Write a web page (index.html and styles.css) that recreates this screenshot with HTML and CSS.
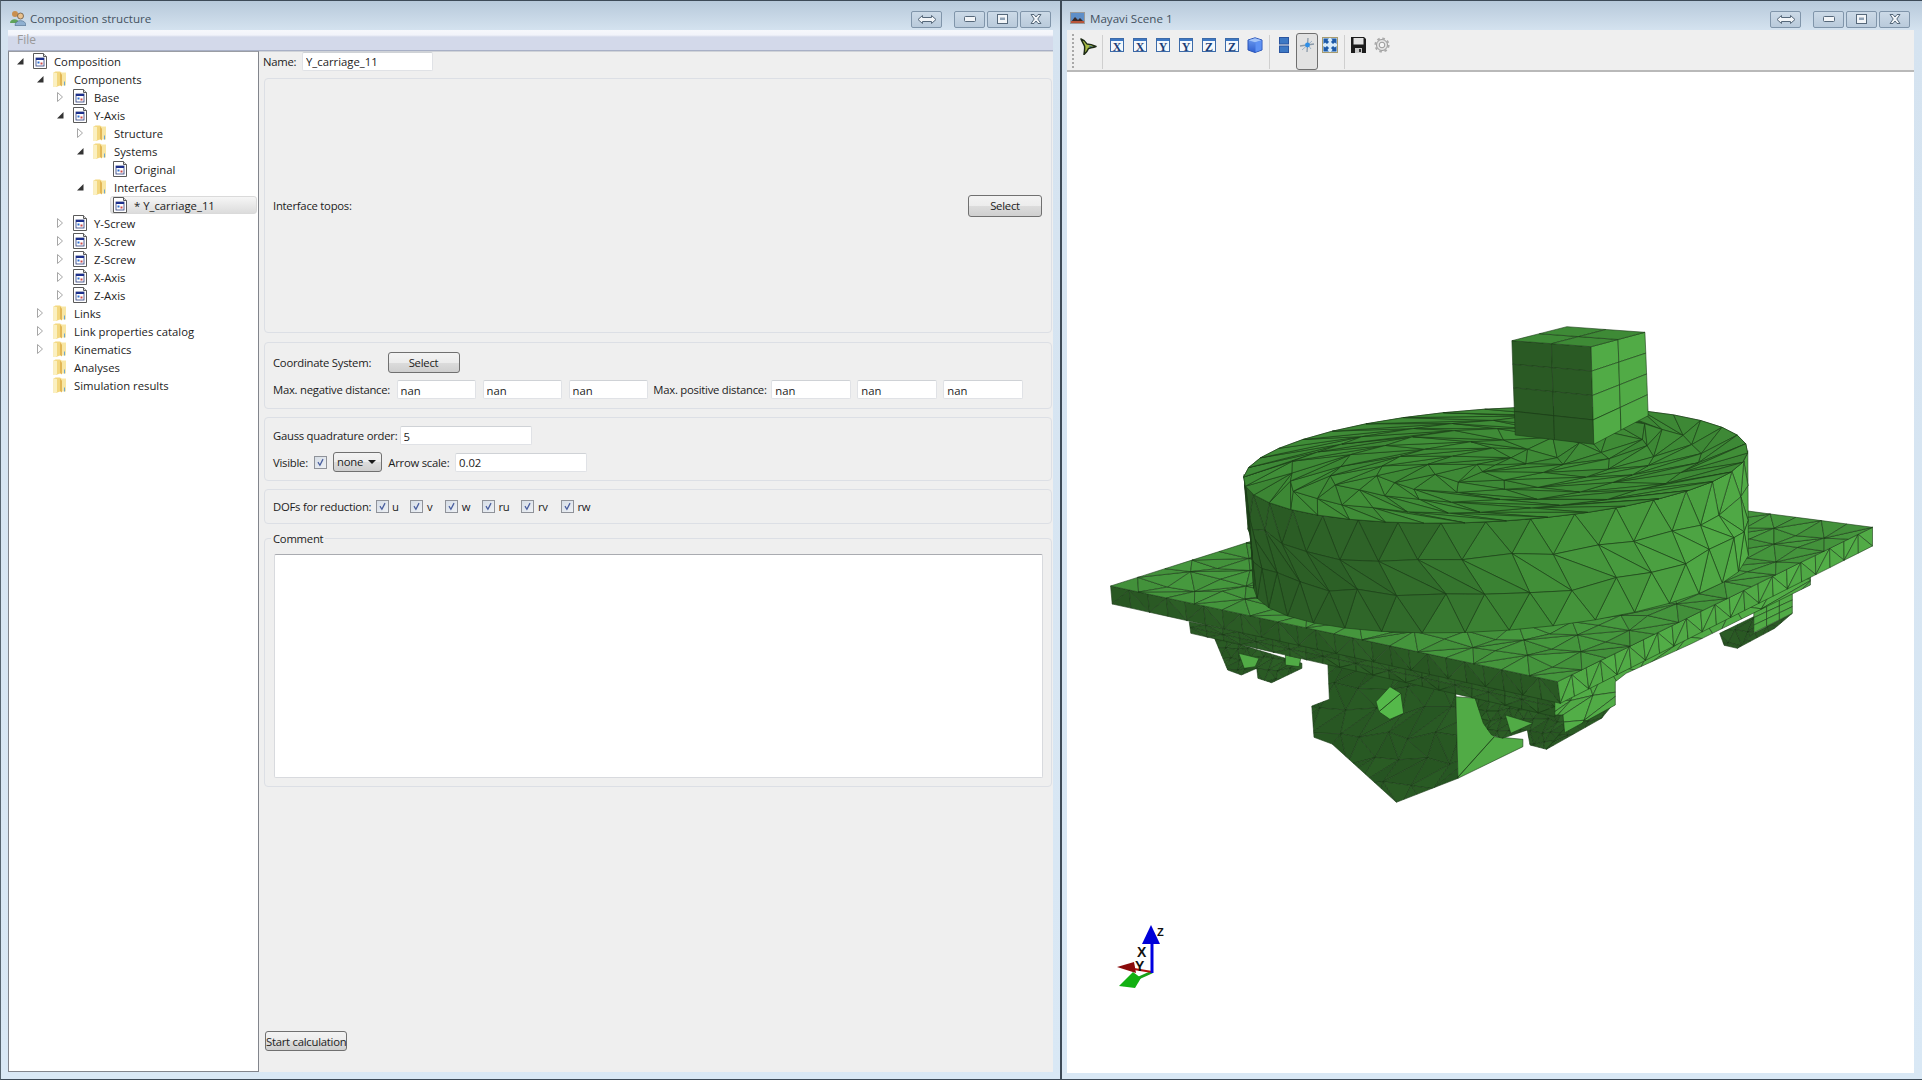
FILE: index.html
```html
<!DOCTYPE html>
<html>
	<head>
		<title>Composition structure</title>
		<link rel="stylesheet" href="styles.css">
	</head>
	<body>
		<svg class="defs" width="0" height="0">
			<linearGradient id="cube-side" x1="0" y1="0" x2="0" y2="1">
				<stop offset="0" stop-color="#6f9df0"/>
				<stop offset="1" stop-color="#2f5fd0"/>
			</linearGradient>
			<symbol id="doc" viewBox="0 0 14 16">
				<path d="M.5 .5H10.5L13.5 3.5V15.5H.5Z" fill="#fff" stroke="#5a5a5a"/>
				<path d="M10.5 .5V3.5H13.5" fill="#ddd" stroke="#5a5a5a"/>
				<rect x="3" y="5" width="8" height="8" fill="#fff" stroke="#2a3a7a" stroke-width=".8"/>
				<rect x="3" y="5" width="8" height="2" fill="#1c2f8c"/>
				<rect x="4.5" y="8.5" width="2" height="2" fill="#2f6fd0"/>
				<rect x="7.5" y="9.5" width="2" height="2" fill="#d04a4a"/>
			</symbol>
			<symbol id="folder" viewBox="0 0 13 16">
				<path d="M0 1.5L2 .5H6.5L8 1.5V14L2.5 16H0Z" fill="#f3d77f"/>
				<path d="M7 1.5H12.5V14.5H7Z" fill="#f8e6a4"/>
				<path d="M0 1.5V16H2.5L3.5 15V2Z" fill="#fbf0c0"/>
				<path d="M6.5 1.5L8.5 3.5V15.5L6.5 14Z" fill="#e2b655"/>
				<path d="M11.5 10.5V14.5H10.5V10.5Z" fill="#6fa6d0"/>
			</symbol>
			<symbol id="open" viewBox="0 0 8 10">
				<path d="M7.5 2V8.5H1Z" fill="#333"/>
			</symbol>
			<symbol id="closed" viewBox="0 0 8 10">
				<path d="M1.5 .5L6.5 5L1.5 9.5Z" fill="#fff" stroke="#a6a6a6"/>
			</symbol>
			<symbol id="check" viewBox="0 0 13 13">
				<path d="M3.5 6L5.8 9.8L9.5 2.5" fill="none" stroke="#4a5f9f" stroke-width="1.5"/>
			</symbol>
			<symbol id="axis-box" viewBox="0 0 14 14">
				<rect x=".5" y=".5" width="13" height="13" fill="#f4f8fc" stroke="#3c6aa8"/>
				<rect x="1" y="1" width="12" height="2" fill="#3d78c4"/>
			</symbol>
		</svg>

		<div class="window window-left">
			<div class="titlebar">
				<svg class="title-icon" viewBox="0 0 16 16">
					<circle cx="5" cy="4" r="3" fill="#c98f4e"/>
					<path d="M0 13C0 8 9 8 9 13Z" fill="#5fa35a"/>
					<circle cx="10.5" cy="6" r="3" fill="#e9c18d" stroke="#5a4630" stroke-width=".7"/>
					<path d="M5 15.5C5 9 16 9 16 15.5Z" fill="#8fb0d0" stroke="#4a6a8a" stroke-width=".6"/>
				</svg>
				<span class="title-text">Composition structure</span>
				<div class="winbtn winbtn-wide">
					<svg width="20" height="11" viewBox="0 0 20 11"><path d="M1 5.5L5.5 1.5V3.5H14.5V1.5L19 5.5L14.5 9.5V7.5H5.5V9.5Z" fill="#f2f5f8" stroke="#56687a"/></svg>
				</div>
				<div class="winbtn winbtn-min">
					<svg width="12" height="6" viewBox="0 0 12 6"><rect x=".5" y=".5" width="11" height="5" rx="1" fill="#f2f5f8" stroke="#56687a"/></svg>
				</div>
				<div class="winbtn">
					<svg width="11" height="10" viewBox="0 0 11 10"><rect x=".5" y=".5" width="10" height="9" fill="#f2f5f8" stroke="#56687a"/><rect x="3" y="3.5" width="5" height="2.5" fill="#8fa2b5"/></svg>
				</div>
				<div class="winbtn">
					<svg width="12" height="10" viewBox="0 0 12 10"><path d="M1 .5H4L6 3L8 .5H11L7.8 5L11 9.5H8L6 7L4 9.5H1L4.2 5Z" fill="#f2f5f8" stroke="#56687a"/></svg>
				</div>
			</div>
			<div class="menubar"><span class="menu-item">File</span></div>
			<div class="client">
				<div class="tree">
					<div class="row lvl0"><svg class="arrow"><use href="#open"/></svg><div class="item"><svg class="ico"><use href="#doc"/></svg>Composition</div></div>
					<div class="row lvl1"><svg class="arrow"><use href="#open"/></svg><div class="item"><svg class="ico"><use href="#folder"/></svg>Components</div></div>
					<div class="row lvl2"><svg class="arrow"><use href="#closed"/></svg><div class="item"><svg class="ico"><use href="#doc"/></svg>Base</div></div>
					<div class="row lvl2"><svg class="arrow"><use href="#open"/></svg><div class="item"><svg class="ico"><use href="#doc"/></svg>Y-Axis</div></div>
					<div class="row lvl3"><svg class="arrow"><use href="#closed"/></svg><div class="item"><svg class="ico"><use href="#folder"/></svg>Structure</div></div>
					<div class="row lvl3"><svg class="arrow"><use href="#open"/></svg><div class="item"><svg class="ico"><use href="#folder"/></svg>Systems</div></div>
					<div class="row lvl4"><span class="arrow"></span><div class="item"><svg class="ico"><use href="#doc"/></svg>Original</div></div>
					<div class="row lvl3"><svg class="arrow"><use href="#open"/></svg><div class="item"><svg class="ico"><use href="#folder"/></svg>Interfaces</div></div>
					<div class="row lvl4"><span class="arrow"></span><div class="item selected"><svg class="ico"><use href="#doc"/></svg>* Y_carriage_11</div></div>
					<div class="row lvl2"><svg class="arrow"><use href="#closed"/></svg><div class="item"><svg class="ico"><use href="#doc"/></svg>Y-Screw</div></div>
					<div class="row lvl2"><svg class="arrow"><use href="#closed"/></svg><div class="item"><svg class="ico"><use href="#doc"/></svg>X-Screw</div></div>
					<div class="row lvl2"><svg class="arrow"><use href="#closed"/></svg><div class="item"><svg class="ico"><use href="#doc"/></svg>Z-Screw</div></div>
					<div class="row lvl2"><svg class="arrow"><use href="#closed"/></svg><div class="item"><svg class="ico"><use href="#doc"/></svg>X-Axis</div></div>
					<div class="row lvl2"><svg class="arrow"><use href="#closed"/></svg><div class="item"><svg class="ico"><use href="#doc"/></svg>Z-Axis</div></div>
					<div class="row lvl1"><svg class="arrow"><use href="#closed"/></svg><div class="item"><svg class="ico"><use href="#folder"/></svg>Links</div></div>
					<div class="row lvl1"><svg class="arrow"><use href="#closed"/></svg><div class="item"><svg class="ico"><use href="#folder"/></svg>Link properties catalog</div></div>
					<div class="row lvl1"><svg class="arrow"><use href="#closed"/></svg><div class="item"><svg class="ico"><use href="#folder"/></svg>Kinematics</div></div>
					<div class="row lvl1"><span class="arrow"></span><div class="item"><svg class="ico"><use href="#folder"/></svg>Analyses</div></div>
					<div class="row lvl1"><span class="arrow"></span><div class="item"><svg class="ico"><use href="#folder"/></svg>Simulation results</div></div>
				</div>
				<div class="form">
					<div class="name-row">
						<label class="name-label">Name:</label>
						<input class="field field-name" value="Y_carriage_11">
					</div>
					<div class="group group-topos">
						<span>Interface topos:</span>
						<button class="btn btn-select">Select</button>
					</div>
					<div class="group group-coord">
						<div class="line">
							<label class="lbl-coord">Coordinate System:</label>
							<button class="btn btn-select-coord">Select</button>
						</div>
						<div class="line line-gap">
							<label class="lbl-neg">Max. negative distance:</label>
							<input class="field field-nan" value="nan">
							<input class="field field-nan" value="nan">
							<input class="field field-nan" value="nan">
							<label class="lbl-pos">Max. positive distance:</label>
							<input class="field field-nan" value="nan">
							<input class="field field-nan" value="nan">
							<input class="field field-nan" value="nan">
						</div>
					</div>
					<div class="group group-gauss">
						<div class="line">
							<label class="lbl-gauss">Gauss quadrature order:</label>
							<input class="field field-long" value="5">
						</div>
						<div class="line line-gap">
							<label class="lbl-visible">Visible:</label>
							<span class="check"><svg><use href="#check"/></svg></span>
							<div class="combo">none</div>
							<label class="lbl-arrow">Arrow scale:</label>
							<input class="field field-long" value="0.02">
						</div>
					</div>
					<div class="group group-dofs">
						<label class="lbl-dofs">DOFs for reduction:</label>
						<div class="dof"><span class="check"><svg><use href="#check"/></svg></span>u</div>
						<div class="dof"><span class="check"><svg><use href="#check"/></svg></span>v</div>
						<div class="dof dof-w"><span class="check"><svg><use href="#check"/></svg></span>w</div>
						<div class="dof dof-r"><span class="check"><svg><use href="#check"/></svg></span>ru</div>
						<div class="dof dof-r"><span class="check"><svg><use href="#check"/></svg></span>rv</div>
						<div class="dof dof-r"><span class="check"><svg><use href="#check"/></svg></span>rw</div>
					</div>
					<div class="group group-comment">
						<span class="legend">Comment</span>
						<textarea class="comment"></textarea>
					</div>
					<button class="btn btn-start">Start calculation</button>
				</div>
			</div>
		</div>

		<div class="window window-right">
			<div class="titlebar">
				<svg class="scene-icon" viewBox="0 0 15 12">
					<rect x=".5" y=".5" width="14" height="11" fill="#5f8fc8" stroke="#9a9a9a"/>
					<path d="M1 10L5 5L8 8L10 6L14 10V11H1Z" fill="#3a2a28"/>
					<path d="M1 9H14V11H1Z" fill="#b8553a"/>
				</svg>
				<span class="title-text">Mayavi Scene 1</span>
				<div class="winbtn winbtn-wide">
					<svg width="20" height="11" viewBox="0 0 20 11"><path d="M1 5.5L5.5 1.5V3.5H14.5V1.5L19 5.5L14.5 9.5V7.5H5.5V9.5Z" fill="#f2f5f8" stroke="#56687a"/></svg>
				</div>
				<div class="winbtn winbtn-min">
					<svg width="12" height="6" viewBox="0 0 12 6"><rect x=".5" y=".5" width="11" height="5" rx="1" fill="#f2f5f8" stroke="#56687a"/></svg>
				</div>
				<div class="winbtn">
					<svg width="11" height="10" viewBox="0 0 11 10"><rect x=".5" y=".5" width="10" height="9" fill="#f2f5f8" stroke="#56687a"/><rect x="3" y="3.5" width="5" height="2.5" fill="#8fa2b5"/></svg>
				</div>
				<div class="winbtn">
					<svg width="12" height="10" viewBox="0 0 12 10"><path d="M1 .5H4L6 3L8 .5H11L7.8 5L11 9.5H8L6 7L4 9.5H1L4.2 5Z" fill="#f2f5f8" stroke="#56687a"/></svg>
				</div>
			</div>
			<div class="toolbar">
				<span class="grip"></span>
				<svg class="tb-mayavi" viewBox="0 0 17 17">
					<path d="M1 1C4 2 6 4 7 6C10 6 13 7 16 8.5C13 9.5 10 10 8.5 10.5C7.5 13 6 15 4 16.5C4.5 13 5 10.5 4.5 8C3.5 6 2 3.5 1 1Z" fill="#a9bc45" stroke="#1d2a16" stroke-width="1.5" stroke-linejoin="round"/>
					<path d="M9 7.5L13 8.5L9.5 9.3Z" fill="#3f6f8f"/>
				</svg>
				<span class="sep"></span>
				<svg class="tb-axis"><use href="#axis-box"/><text x="7" y="12.5">X</text></svg>
				<svg class="tb-axis"><use href="#axis-box"/><text x="7" y="12.5">X</text></svg>
				<svg class="tb-axis"><use href="#axis-box"/><text x="7" y="12.5">Y</text></svg>
				<svg class="tb-axis"><use href="#axis-box"/><text x="7" y="12.5">Y</text></svg>
				<svg class="tb-axis"><use href="#axis-box"/><text x="7" y="12.5">Z</text></svg>
				<svg class="tb-axis"><use href="#axis-box"/><text x="7" y="12.5">Z</text></svg>
				<svg class="tb-cube" viewBox="0 0 16 16">
					<path d="M8 .8L15 3V13L8 15.5L1 13V3Z" fill="url(#cube-side)" stroke="#2a55b8" stroke-linejoin="round"/>
					<path d="M1.5 3.2L8 1.2L14.5 3.2L8 5.2Z" fill="#a4c4f8"/>
					<path d="M8.5 5.5V15L14.5 12.7V3.5Z" fill="#5f92f4"/>
				</svg>
				<span class="sep sep-cube"></span>
				<svg class="tb-split" viewBox="0 0 10 16">
					<rect x=".5" y=".5" width="9" height="6.5" fill="#3d78c4" stroke="#2a55a0"/>
					<rect x=".5" y="9" width="9" height="6.5" fill="#3d78c4" stroke="#2a55a0"/>
				</svg>
				<div class="tb-active">
					<svg width="16" height="16" viewBox="0 0 16 16">
						<path d="M9 1L8 15M1 9L15 7" stroke="#8a99a8" stroke-width="1.3"/>
						<path d="M3 13L13 4M12 12L9 8" stroke="#9fb4c8" stroke-width="1"/>
						<circle cx="8.5" cy="8" r="2.4" fill="#2f8fe8"/>
					</svg>
				</div>
				<svg class="tb-full" viewBox="0 0 16 16">
					<rect x=".5" y=".5" width="15" height="15" fill="#d8ecfb" stroke="#a89c70"/>
					<path d="M1.5 1.5H7L5.4 3.1L7 5L5 7L3.1 5.4L1.5 7ZM14.5 1.5V7L12.9 5.4L11 7L9 5L10.6 3.1L9 1.5ZM1.5 14.5V9L3.1 10.6L5 9L7 11L5.4 12.9L7 14.5ZM14.5 14.5H9L10.6 12.9L9 11L11 9L12.9 10.6L14.5 9Z" fill="#1d5aa8"/>
				</svg>
				<span class="sep sep-full"></span>
				<svg class="tb-save" viewBox="0 0 15 16">
					<path d="M0 0H13L15 2V16H0Z" fill="#1c1c1c"/>
					<rect x="2.5" y="1" width="10" height="6.5" fill="#e2e2e2"/>
					<rect x="4" y="11" width="7" height="5" fill="#c8c8c8"/>
					<rect x="8" y="12" width="2" height="3" fill="#333"/>
				</svg>
				<svg class="tb-gear" viewBox="0 0 16 16">
					<circle cx="8" cy="8" r="5.5" fill="#e4e4e4" stroke="#999" stroke-width="1"/>
					<circle cx="8" cy="8" r="6.6" fill="none" stroke="#aaa" stroke-width="2" stroke-dasharray="2.6 2.6"/>
					<circle cx="8" cy="8" r="2.8" fill="#f4f4f4" stroke="#999"/>
				</svg>
			</div>
			<div class="scene">
				<svg id="mesh" class="scene-svg" viewBox="1067 72 846 1001">
					<path d="M1152 972L1123 985" stroke="#1aa01a" stroke-width="3"/>
					<path d="M1119 986L1133 972L1141 978L1135 988Z" fill="#12b012"/>
					<path d="M1152 972L1128 968" stroke="#b01010" stroke-width="2"/>
					<path d="M1117 967L1134 962L1136 973Z" fill="#8a0c0c"/>
					<path d="M1152 973V940" stroke="#0000e0" stroke-width="3"/>
					<path d="M1151 925L1160 944H1142Z" fill="#0000d8"/>
					<text class="axis-label" x="1157" y="936">Z</text>
					<text class="axis-label axis-large" x="1137" y="957">X</text>
					<text class="axis-label axis-large" x="1135" y="971">Y</text>
				</svg>
			</div>
		</div>
		<script src="mesh.js"></script>
	</body>
</html>
```

FILE: styles.css
```css
html, body { margin: 0; padding: 0; }
body {
	display: flex;
	width: 1922px;
	height: 1080px;
	overflow: hidden;
	font-family: "Open Sans", "Noto Sans", sans-serif;
	font-size: 11.3px;
	color: #1c1c1c;
	background: #d9e7f4;
}
.defs { position: absolute; }

.window {
	box-sizing: border-box;
	display: flex;
	flex-direction: column;
	height: 1080px;
	background: linear-gradient(180deg, #b7c9da 0, #d5e3f0 30px, #d9e8f5 100%);
	border-top: 1px solid #3d4a57;
	border-bottom: 1px solid #3d4a57;
}
.window-left { width: 1061px; border-left: 1px solid #56646f; border-right: 1px solid #3d4a57; padding: 0 7px 7px 7px; }
.window-right { width: 861px; border-left: 1px solid #3d4a57; padding: 0 8px 6px 5px; }

.titlebar { display: flex; align-items: center; height: 29px; flex: none; }
.title-icon { width: 16px; height: 16px; margin: 5px 4px 0 2px; }
.scene-icon { width: 15px; height: 12px; margin: 5px 5px 0 3px; }
.title-text { flex: 1; color: #44525f; font-size: 11.6px; margin-top: 5px; }
.winbtn {
	box-sizing: border-box;
	display: flex;
	align-items: center;
	justify-content: center;
	width: 31px;
	height: 17px;
	margin: 7px 0 0 2px;
	border: 1px solid #8095aa;
	border-radius: 2px;
	background: linear-gradient(180deg, #ccdae7, #b9cadb);
}
.winbtn-wide { margin-right: 10px; }
.window-left .winbtn:last-child { margin-right: 2px; }
.window-right .winbtn:last-child { margin-right: 4px; }

.menubar {
	flex: none;
	box-sizing: border-box;
	height: 21px;
	padding: 1px 0 0 9px;
	background: linear-gradient(180deg, #f6f8fc 0, #f2f4fa 5px, #d3d9ea 7px, #d3d9ea 100%);
	border-bottom: 1px solid #a8b0c6;
}
.menu-item { color: #9a9a9a; font-size: 12px; }

.client { flex: 1; display: flex; min-height: 0; }

.tree {
	box-sizing: border-box;
	width: 251px;
	flex: none;
	background: #fff;
	border: 1px solid #82858c;
	border-top: 1px solid #9a9da4;
}
.row { display: flex; align-items: center; height: 18px; }
.lvl0 { padding-left: 7px; }
.lvl1 { padding-left: 27px; }
.lvl2 { padding-left: 47px; }
.lvl3 { padding-left: 67px; }
.lvl4 { padding-left: 87px; }
.arrow { flex: none; width: 8px; height: 10px; margin-right: 6px; }
.item { flex: 1; display: flex; align-items: center; height: 18px; padding-left: 3px; box-sizing: border-box; white-space: pre; }
.ico { flex: none; width: 14px; height: 16px; margin-right: 7px; }
.selected {
	margin-right: 1px;
	background: linear-gradient(180deg, #f6f6f6, #dcdcdc);
	border: 1px solid #dadada;
	border-radius: 3px;
	padding-left: 2px;
}

.form { flex: 1; display: flex; flex-direction: column; background: #efefef; border-top: 1px solid #d0d3d8; min-width: 0; letter-spacing: -0.25px; }
.form label, .form span, .dof, .btn { white-space: nowrap; flex: none; }
.name-row { display: flex; align-items: center; height: 18px; }
.name-label { width: 39px; padding-left: 4px; box-sizing: border-box; margin-right: 4px; }

.field {
	box-sizing: border-box;
	flex: none;
	height: 19px;
	padding: 1px 3px 0;
	font: inherit;
	letter-spacing: 0;
	color: #1c1c1c;
	background: #fff;
	border: 1px solid #e0e2e6;
	border-top-color: #cfd2d6;
	border-radius: 2px;
	outline: none;
}
.field-name { width: 131px; }
.field-nan { width: 79.5px; margin-right: 6.5px; }
.field-long { width: 132px; }

.group {
	box-sizing: border-box;
	margin: 8px 1px 0 5px;
	padding: 0 9px 0 8px;
	border: 1px solid #dcdfe5;
	border-radius: 4px;
	flex: none;
}
.group-topos { height: 255px; margin-top: 8px; display: flex; align-items: center; justify-content: space-between; }
.group-coord { height: 67px; margin-top: 9px; padding-top: 9px; }
.group-gauss { height: 64px; padding-top: 8px; }
.group-dofs { height: 35px; display: flex; align-items: center; }
.group-comment { height: 249px; margin-top: 14px; padding: 15px 7px 0 9px; position: relative; }

.line { display: flex; align-items: center; }
.line-gap { margin-top: 7px; }
.lbl-coord { width: 114.5px; }
.lbl-neg { width: 123.5px; }
.lbl-pos { width: 118px; margin-left: -1.2px; }
.lbl-gauss { width: 126.5px; }
.lbl-visible { width: 40.5px; }
.lbl-arrow { width: 66.7px; margin-left: 6.3px; }
.lbl-dofs { width: 102.5px; }

.legend { position: absolute; top: -8px; left: 6px; padding: 0 2px; background: #efefef; }
.comment {
	display: block;
	box-sizing: border-box;
	width: 769px;
	height: 224px;
	resize: none;
	background: #fff;
	border: 1px solid #d8dade;
	border-top-color: #a9abb0;
	border-radius: 2px;
	outline: none;
}

.btn {
	box-sizing: border-box;
	padding: 0;
	font: inherit;
	letter-spacing: -0.25px;
	color: #1c1c1c;
	background: linear-gradient(180deg, #f3f3f3 0, #ececec 50%, #dcdcdc 51%, #cfcfcf 100%);
	border: 1px solid #707070;
	border-radius: 3px;
}
.btn-select { width: 74px; height: 22px; }
.btn-select-coord { width: 72px; height: 21px; }
.btn-start { width: 82px; height: 20px; margin: auto 0 21px 6px; }

.check {
	flex: none;
	box-sizing: border-box;
	display: inline-block;
	width: 13px;
	height: 13px;
	background: linear-gradient(135deg, #d6dde6, #eef1f5);
	border: 1px solid #8f9299;
}
.check svg { display: block; width: 11px; height: 11px; }
.combo {
	box-sizing: border-box;
	position: relative;
	flex: none;
	width: 49px;
	height: 20px;
	line-height: 18px;
	margin-left: 6.5px;
	padding-left: 3px;
	background: linear-gradient(180deg, #f3f3f3 0, #ececec 50%, #dcdcdc 51%, #cfcfcf 100%);
	border: 1px solid #707070;
	border-radius: 3px;
}
.combo::after {
	content: "";
	position: absolute;
	top: 7px;
	right: 5px;
	border-left: 4px solid transparent;
	border-right: 4px solid transparent;
	border-top: 4px solid #1a1a1a;
}
.dof { display: flex; align-items: center; gap: 3.5px; width: 34.9px; }
.dof-w { width: 36.6px; }
.dof-r { width: 39.5px; }

.toolbar {
	flex: none;
	box-sizing: border-box;
	display: flex;
	align-items: flex-start;
	height: 42px;
	padding: 8px 0 0 5px;
	background: #efefef;
	border-bottom: 2px solid #b9b9b9;
}
.grip { width: 2px; height: 34px; margin: -4px 6px 0 0; background: repeating-linear-gradient(180deg, #a8a8a8 0 2px, transparent 2px 4px); }
.tb-mayavi { width: 17px; height: 17px; margin-right: 5px; flex: none; }
.sep { width: 1px; height: 34px; background: #cfcfcf; margin: -3px 7px 0 0; }
.tb-axis { width: 14px; height: 14px; margin-right: 9px; flex: none; }
.tb-axis text { font: bold 12px "Liberation Serif", serif; fill: #1c3f78; text-anchor: middle; }
.tb-cube { width: 16px; height: 16px; margin: -1px 6px 0 -1px; flex: none; }
.sep-cube { margin-right: 9px; }
.tb-split { width: 10px; height: 16px; margin: -1px 7px 0 0; flex: none; }
.tb-active {
	box-sizing: border-box;
	display: flex;
	align-items: flex-start;
	justify-content: center;
	width: 22px;
	height: 37px;
	margin: -5px 4px 0 0;
	padding-top: 3px;
	background: #e2e2e2;
	border: 1px solid #6f6f6f;
	border-radius: 3px;
}
.tb-full { width: 16px; height: 16px; margin: -1px 6px 0 0; flex: none; }
.sep-full { margin-right: 6px; }
.tb-save { width: 15px; height: 16px; margin: -1px 8px 0 0; flex: none; }
.tb-gear { width: 16px; height: 16px; margin-top: -1px; flex: none; }

.scene { flex: 1; background: #fff; min-height: 0; }
.scene-svg { display: block; width: 846px; height: 1001px; }
.axis-label { font: bold 11px "Liberation Sans", sans-serif; fill: #111; }
.axis-large { font-size: 14px; }
```

FILE: mesh.js
```js
var svg = document.getElementById("mesh");
var first = svg.firstChild;
var NS = "http://www.w3.org/2000/svg";
var seed = 4711;
var clipCount = 0;

var DARK = [42, 90, 36], MID = [62, 138, 54], LIGHT = [81, 171, 70];

function rnd() {
	seed = (seed * 16807) % 2147483647;
	return seed / 2147483647;
}

// coordinates read off the reference crop
function Z(x, y) {
	return [1060 + x / 1.819, 300 + y / 3];
}

function mix(a, b, k) {
	return [a[0] + (b[0] - a[0]) * k, a[1] + (b[1] - a[1]) * k, a[2] + (b[2] - a[2]) * k];
}

function rgb(c, spread) {
	var k = 1 + (rnd() - 0.5) * (spread || 0);
	return "rgb(" + Math.round(c[0] * k) + "," + Math.round(c[1] * k) + "," + Math.round(c[2] * k) + ")";
}

function poly(points, fill, parent) {
	var el = document.createElementNS(NS, "polygon");
	el.setAttribute("points", points.map(function (p) { return p[0].toFixed(1) + "," + p[1].toFixed(1); }).join(" "));
	el.setAttribute("fill", fill);
	el.setAttribute("stroke", "#1b3a17");
	el.setAttribute("stroke-width", "0.6");
	el.setAttribute("stroke-linejoin", "round");
	(parent || svg).insertBefore(el, parent ? null : first);
	return el;
}

// a quad a-b-c-d cut in nu x nv cells, with or without diagonals
function quad(a, b, c, d, nu, nv, opt) {
	var grid = [], u, v;
	for (u = 0; u <= nu; u++) {
		grid[u] = [];
		for (v = 0; v <= nv; v++) {
			var s = u / nu, t = v / nv;
			var x = a[0] * (1 - s) * (1 - t) + b[0] * s * (1 - t) + c[0] * s * t + d[0] * (1 - s) * t;
			var y = a[1] * (1 - s) * (1 - t) + b[1] * s * (1 - t) + c[1] * s * t + d[1] * (1 - s) * t;
			if (opt.jitter && u > 0 && u < nu && v > 0 && v < nv) {
				x += (rnd() - 0.5) * opt.jitter;
				y += (rnd() - 0.5) * opt.jitter;
			}
			grid[u][v] = [x, y];
		}
	}
	for (u = 0; u < nu; u++) {
		for (v = 0; v < nv; v++) {
			var p = grid[u][v], q = grid[u + 1][v], r = grid[u + 1][v + 1], w = grid[u][v + 1];
			if (opt.flat) {
				poly([p, q, r, w], rgb(opt.color));
			} else if ((u + v) % 2) {
				poly([p, q, r], rgb(opt.color, opt.spread));
				poly([p, r, w], rgb(opt.color, opt.spread));
			} else {
				poly([p, q, w], rgb(opt.color, opt.spread));
				poly([q, r, w], rgb(opt.color, opt.spread));
			}
		}
	}
}

// an irregular outline filled with a triangle net, clipped to the outline
function patch(points, color, cell, spread) {
	var id = "clip" + (clipCount++);
	var clip = document.createElementNS(NS, "clipPath");
	clip.setAttribute("id", id);
	poly(points, "#000", clip);
	svg.insertBefore(clip, first);
	var g = document.createElementNS(NS, "g");
	g.setAttribute("clip-path", "url(#" + id + ")");
	svg.insertBefore(g, first);
	var xs = points.map(function (p) { return p[0]; }), ys = points.map(function (p) { return p[1]; });
	var x0 = Math.min.apply(null, xs) - cell, x1 = Math.max.apply(null, xs) + cell;
	var y0 = Math.min.apply(null, ys) - cell, y1 = Math.max.apply(null, ys) + cell;
	var net = [], i, j;
	for (j = 0; y0 + j * cell <= y1 + cell; j++) {
		net[j] = [];
		for (i = 0; x0 + i * cell <= x1 + cell; i++) {
			net[j][i] = [x0 + i * cell + (j % 2) * cell / 2 + (rnd() - 0.5) * cell * 0.4, y0 + j * cell + (rnd() - 0.5) * cell * 0.4];
		}
	}
	for (j = 0; j < net.length - 1; j++) {
		for (i = 0; i < net[j].length - 1; i++) {
			poly([net[j][i], net[j][i + 1], net[j + 1][i]], rgb(color, spread), g);
			poly([net[j][i + 1], net[j + 1][i + 1], net[j + 1][i]], rgb(color, spread), g);
		}
	}
	poly(points, "none");
}

function ell(c, a, b, t) {
	return [c[0] + a[0] * Math.cos(t) + b[0] * Math.sin(t), c[1] + a[1] * Math.cos(t) + b[1] * Math.sin(t)];
}

function cylinderWall() {
	var rows = 3, n = 18, j, i;
	var from = -2.3 * Math.PI / 180, to = 182.3 * Math.PI / 180;
	var ring = [];
	for (j = 0; j <= rows; j++) {
		var k = j / rows;
		var c = [1495.6 + 5.4 * k, 465 + 106.5 * k];
		var a = [252 - 5 * k, -12 - 1.5 * k];
		var b = [-10 - 4 * k, 57 + 3 * k];
		ring[j] = [];
		for (i = 0; i <= n; i++) {
			var off = (j % 2 && i > 0 && i < n) ? 0.5 : 0;
			var t = from + (to - from) * (i + off) / n;
			var pt = ell(c, a, b, t);
			if (j > 0 && j < rows && i > 0 && i < n) {
				pt[0] += (rnd() - 0.5) * 8;
				pt[1] += (rnd() - 0.5) * 10;
			}
			ring[j][i] = pt;
		}
	}
	function shade(i) {
		var t = from + (to - from) * i / n;
		var k = (Math.cos(t) + 1) / 2;
		if (k < 0.3) return mix(DARK, [46, 100, 40], k / 0.3);
		if (k < 0.6) return mix([46, 100, 40], MID, (k - 0.3) / 0.3);
		return mix(MID, LIGHT, (k - 0.6) / 0.4);
	}
	for (j = 0; j < rows; j++) {
		for (i = 0; i < n; i++) {
			var up = ring[j], dn = ring[j + 1];
			var col = shade(i + 0.5);
			poly([up[i], up[i + 1], dn[i]], rgb(col, 0.05));
			poly([up[i + 1], dn[i + 1], dn[i]], rgb(col, 0.05));
		}
	}
}

function cylinderTop() {
	var c = [1495.6, 465], a = [252, -12], b = [-10, 57];
	var radii = [1, 0.82, 0.64, 0.46, 0.28, 0.1];
	var counts = [38, 31, 24, 17, 10, 4];
	var rings = radii.map(function (r, idx) {
		var pts = [], start = idx * 0.37;
		for (var i = 0; i < counts[idx]; i++) {
			var t = start + (i + (idx ? (rnd() - 0.5) * 0.4 : 0)) / counts[idx] * Math.PI * 2;
			var jr = idx ? r + (rnd() - 0.5) * 0.06 : r;
			pts.push([c[0] + jr * (a[0] * Math.cos(t) + b[0] * Math.sin(t)), c[1] + jr * (a[1] * Math.cos(t) + b[1] * Math.sin(t))]);
		}
		return pts;
	});
	poly(rings[0], rgb(MID));
	for (var j = 0; j < rings.length - 1; j++) {
		var o = rings[j], q = rings[j + 1], x = 0, y = 0;
		while (x < o.length || y < q.length) {
			if (y >= q.length || (x < o.length && x / o.length <= y / q.length)) {
				poly([o[x % o.length], o[(x + 1) % o.length], q[y % q.length]], rgb(MID, 0.06));
				x++;
			} else {
				poly([o[x % o.length], q[(y + 1) % q.length], q[y % q.length]], rgb(MID, 0.06));
				y++;
			}
		}
	}
	rings[rings.length - 1].forEach(function (p, i, all) {
		poly([c, p, all[(i + 1) % all.length]], rgb(MID, 0.06));
	});
}

// right foot, behind everything
patch([Z(1200, 1000), Z(1262, 950), Z(1262, 1000), Z(1232, 1045), Z(1208, 1036)], DARK, 14, 0.1);
patch([Z(1262, 1000), Z(1332, 940), Z(1300, 985), Z(1232, 1045)], DARK, 14, 0.1);
quad(Z(1262, 930), Z(1332, 880), Z(1332, 940), Z(1262, 998), 3, 3, { color: LIGHT, flat: true });

// small feet on the left
patch([Z(280, 1010), Z(440, 1090), Z(440, 1105), Z(385, 1148), Z(360, 1135), Z(358, 1105), Z(330, 1125), Z(305, 1110)], DARK, 11, 0.12);
poly([Z(325, 1060), Z(362, 1075), Z(355, 1100), Z(335, 1105)], rgb(LIGHT));
poly([Z(410, 1065), Z(438, 1075), Z(435, 1100), Z(410, 1095)], rgb(LIGHT));

// centre block
patch([Z(458, 1218), Z(490, 1198), Z(487, 1080), Z(720, 1170), Z(724, 1435), Z(612, 1507), Z(495, 1332), Z(462, 1312)], [40, 88, 35], 25, 0.1);
poly([Z(720, 1190), Z(760, 1195), Z(790, 1310), Z(842, 1318), Z(842, 1340), Z(724, 1435)], rgb(LIGHT));
poly([Z(722, 1435), Z(790, 1310)], "none");
poly([Z(600, 1160), Z(620, 1180), Z(625, 1240), Z(600, 1258), Z(580, 1235), Z(575, 1205)], "rgb(85,185,74)");
poly([Z(580, 1235), Z(620, 1180)], "none");

// feet under the right half
patch([Z(755, 1195), Z(915, 1235), Z(918, 1295), Z(885, 1348), Z(855, 1335), Z(850, 1290), Z(805, 1315), Z(785, 1305), Z(770, 1270)], DARK, 11, 0.12);
poly([Z(810, 1245), Z(860, 1270), Z(820, 1300)], rgb(LIGHT));
patch([Z(915, 1290), Z(1005, 1215), Z(985, 1255), Z(885, 1348)], DARK, 14, 0.1);

// light steps under the plate
patch([Z(895, 1205), Z(1365, 825), Z(1365, 855), Z(1150, 1030), Z(1030, 1120), Z(1010, 1145), Z(1010, 1215), Z(918, 1298), Z(915, 1245), Z(895, 1245)], LIGHT, 30, 0.04);

// dark step under the plate
quad(Z(235, 965), Z(900, 1190), Z(900, 1250), Z(238, 1000), 22, 2, { color: DARK, spread: 0.1 });

// plate
quad(Z(92, 858), Z(905, 1145), Z(910, 1210), Z(95, 912), 24, 1, { color: DARK, spread: 0.1 });
quad(Z(905, 1145), Z(1478, 682), Z(1478, 738), Z(910, 1210), 22, 1, { color: LIGHT, spread: 0.05 });
quad(Z(92, 858), Z(905, 1145), Z(1478, 682), [1463.6, 473.8], 16, 13, { color: [68, 148, 60], jitter: 8, spread: 0.07 });

cylinderWall();
cylinderTop();

// box on top
quad(Z(822, 122), Z(966, 140), Z(971, 433), Z(828, 405), 2, 4, { color: DARK, flat: true });
quad(Z(966, 140), Z(1064, 97), Z(1070, 347), Z(971, 433), 2, 4, { color: LIGHT, flat: true });
quad(Z(822, 122), Z(966, 140), Z(1064, 97), Z(922, 80), 2, 2, { color: MID, flat: true });
```
